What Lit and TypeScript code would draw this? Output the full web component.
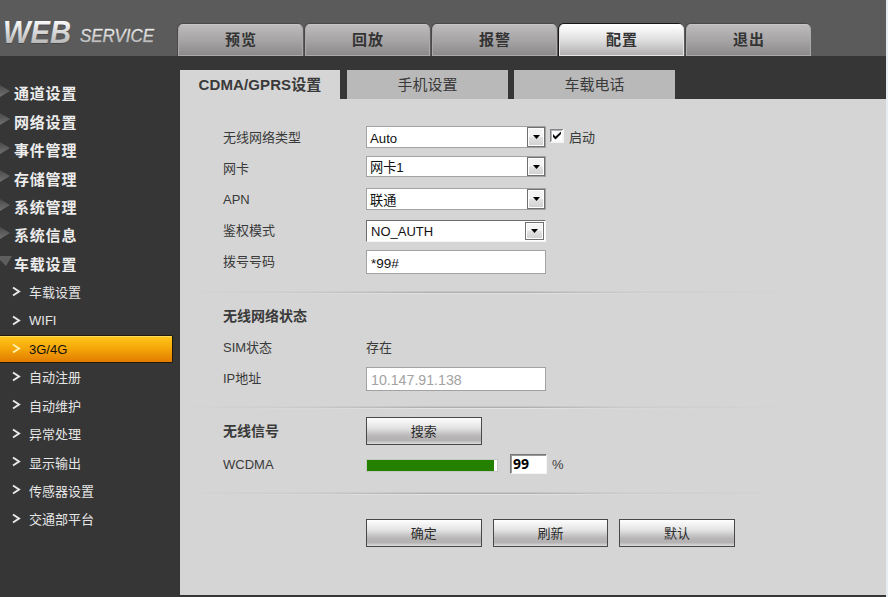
import { LitElement, html, css, svg } from "lit";
import { customElement, property } from "lit/decorators.js";
import { classMap } from "lit/directives/class-map.js";

const arrow = html`<svg class="arrow" width="7" height="4" viewBox="0 0 7 4"><path d="M0 0h7L3.5 4z" fill="#000" /></svg>`;

@customElement("drop-down")
class DropDown extends LitElement {
  @property() value = "";
  @property({ type: Boolean, reflect: true }) sunken = false;
  @property({ type: Boolean, reflect: true }) short = false;
  static styles = css`
    :host { display: flex; box-sizing: border-box; width: 180px; height: 22px; border: 1px solid #a2a2a2; background: #fff; color: #111; font-size: 13.2px; line-height: 23px; }
    :host([short]) { height: 21px; line-height: 21px; }
    :host([sunken]) { border-color: #6d6d6d #f6f6f6 #f6f6f6 #6d6d6d; padding: 1px 1px 0 1px; line-height: 19px; font-size: 13px; }
    .text { flex: 1; padding-left: 3px; white-space: nowrap; }
    .btn { display: flex; align-items: center; justify-content: center; box-sizing: border-box; width: 18px; border: 1px solid #707070; box-shadow: inset 0 0 0 1px #fff; background: linear-gradient(#f4f4f4 0 48%, #e2e2e2 52%, #d0d0d0); }
    :host([sunken]) .btn { width: 19px; margin-bottom: 1px; }
    .arrow { display: block; }
  `;
  render() {
    return html`<span class="text">${this.value}</span><span class="btn">${arrow}</span>`;
  }
}

const mainTabs = ["预览", "回放", "报警", "配置", "退出"];
const subTabs = ["CDMA/GPRS设置", "手机设置", "车载电话"];
const groups = ["通道设置", "网络设置", "事件管理", "存储管理", "系统管理", "系统信息", "车载设置"];
const pages = ["车载设置", "WIFI", "3G/4G", "自动注册", "自动维护", "异常处理", "显示输出", "传感器设置", "交通部平台"];

@customElement("app-root")
class AppRoot extends LitElement {
  static styles = css`
    :host { display: flex; width: 888px; height: 597px; overflow: hidden; background: #e9eef5; font-family: "Liberation Sans", "Noto Sans CJK SC", sans-serif; font-size: 13px; color: #3a3a3a; }
    .page { display: flex; flex-direction: column; width: 886px; background: #363636; }
    header { display: flex; height: 56px; background: #5b5b5b; flex: none; }
    .logo { width: 177px; flex: none; }
    .logo svg { display: block; }
    .tabs { display: flex; gap: 1px; padding-top: 23px; }
    .tab { box-sizing: border-box; width: 126px; height: 33px; border: 1px solid #484848; border-width: 1px 0 0 1px; border-radius: 6px 6px 0 0; }
    .tab span { display: block; box-sizing: border-box; height: 32px; padding-left: 1px; border: 1px solid #aaa; border-top-color: #c6c6c6; border-radius: 5px 5px 0 0; background: linear-gradient(#bdbbbc, #a4a2a3 55%, #8c8a8b); font: bold 15px/29px "Liberation Sans", "Noto Sans CJK SC", sans-serif; letter-spacing: 1px; text-align: center; color: #333; }
    .tab.on { border-color: #181818; }
    .tab.on span { background: linear-gradient(#fff, #e0dfe0 50%, #b2b0b1); border-color: #e6e6e6; border-top-color: #fff; }
    .body { display: flex; flex: 1; }
    nav { display: flex; flex-direction: column; width: 180px; padding-top: 22.8px; flex: none; }
    .group, .item { display: flex; align-items: center; height: 28.4px; flex: none; white-space: nowrap; }
    .group { font-weight: bold; font-size: 15px; letter-spacing: 0.8px; color: #ececec; }
    .group svg { width: 13px; height: 20px; margin: -4px 1px 0 0; }
    .item { box-sizing: border-box; color: #e6e6e6; }
    .item svg { margin: -1px 8px 0 12px; }
    .item.latin { padding-top: 1px; }
    .item.on { width: 173px; height: 28px; margin: 1px 0 -0.6px; padding: 0; color: #111; border: 1px solid #201a0c; border-left: 0; border-radius: 0 2px 2px 0; background: linear-gradient(#ffc61c, #f6a90a 45%, #e27c00); box-shadow: inset 0 1px #ffdc5a; }
    .main { display: flex; flex-direction: column; width: 706px; padding: 14px 0 2px; }
    .sub { display: flex; height: 29px; font-size: 15px; line-height: 29px; text-align: center; }
    .sub div { background: #b9b9b9; width: 161px; margin-left: 6px; }
    .sub .on { background: #d5d5d5; width: 160px; font-weight: bold; margin: 0 1px 0 0; letter-spacing: 0.1px; }
    .panel { flex: 1; background: #d5d5d5; padding: 23px 0 0 43px; }
    .row { display: grid; grid-template-columns: 143px auto 1fr; align-items: start; height: 31px; line-height: 31px; }
    .row > .ctl { margin-top: 4px; }
    .row > .up { margin-top: 3px; }
    .row > .down { margin-top: 5px; }
    .head { font-size: 14px; font-weight: bold; }
    .input { box-sizing: border-box; width: 180px; height: 24px; border: 1px solid #a2a2a2; background: #fff; padding-left: 4px; font-size: 13.5px; line-height: 25px; color: #111; }
    .input.off { color: #a3a3a3; font-size: 14.2px; }
    .enable { display: flex; padding-left: 4px; }
    .check { width: 14px; height: 14px; margin: 7px 5px 0 0; display: block; }
    .rule { height: 4px; margin-left: -33px; width: 620px; background: linear-gradient(#b0b0b0, #b0b0b0) 0 1px / 100% 1px no-repeat, linear-gradient(#c4c4c4, #c4c4c4) 0 0 / 100% 1px no-repeat, linear-gradient(#e2e2e2, #e2e2e2) 0 2px / 100% 1px no-repeat; mask-image: linear-gradient(90deg, transparent, rgba(0, 0, 0, 0.3) 20%, #000 38%, #000 55%, rgba(0, 0, 0, 0.25) 70%, transparent 96%); }
    .r1 { margin-top: 14px; margin-bottom: 6px; }
    .r2 { margin-top: 12px; margin-bottom: 7px; }
    .r3 { margin-top: 12px; }
    .button { box-sizing: border-box; width: 115.6px; height: 28px; border: 1px solid #484848; background: linear-gradient(#fefefe, #e4e4e4 38%, #b8b6b7 70%, #b3b1b2 86%, #dcdcdc); line-height: 27px; text-align: center; color: #2b2b2b; }
    .heading { height: 32px; line-height: 29px; }
    .heading .button { line-height: 27px; }
    .signal { display: flex; }
    .bar { box-sizing: border-box; width: 132px; height: 13px; margin-top: 10px; border: 1px solid #c4c9c1; background: #fff; }
    .fill { height: 100%; background: #248100; }
    .num { box-sizing: border-box; width: 37px; height: 20px; margin: 5px 5px 0 12px; border: 1px solid; border-color: #777 #f5f5f5 #f5f5f5 #777; box-shadow: inset 1px 1px #999; background: #fff; padding-left: 2px; font: bold 14px/17px "Noto Sans", sans-serif; color: #000; }
    .actions { display: flex; gap: 11px; padding: 23px 0 0 143px; }
  `;

  render() {
    return html`<div class="page">
      <header>
        <div class="logo">
          <svg width="177" height="56" viewBox="0 0 177 56">
            <defs><linearGradient id="silver" x1="0" y1="0" x2="0" y2="1"><stop offset=".2" stop-color="#fafafa" /><stop offset=".9" stop-color="#b0b0b0" /></linearGradient></defs>
            <g font-family="Liberation Sans, sans-serif" font-style="italic">
              <g fill="#3d3d3d" opacity=".6"><text x="3" y="44" font-size="32" font-weight="bold" textLength="68" lengthAdjust="spacingAndGlyphs">WEB</text><text x="80" y="43" font-size="19" textLength="74" lengthAdjust="spacingAndGlyphs">SERVICE</text></g>
              <text x="3" y="42.5" font-size="32" font-weight="bold" fill="url(#silver)" textLength="68" lengthAdjust="spacingAndGlyphs">WEB</text>
              <text x="80" y="42" font-size="19" fill="url(#silver)" stroke="#c4c4c4" stroke-width=".4" textLength="74" lengthAdjust="spacingAndGlyphs">SERVICE</text>
            </g>
          </svg>
        </div>
        <div class="tabs">${mainTabs.map((t, i) => html`<div class=${classMap({ tab: true, on: i === 3 })}><span>${t}</span></div>`)}</div>
      </header>
      <div class="body">
        <nav>
          ${groups.map((g, i) => html`<div class="group">
            <svg viewBox="0 0 13 20">
              <defs><linearGradient id="shade" x1="0" y1="0" x2="0" y2="1"><stop offset="0" stop-color="#4a4a4a" /><stop offset="1" stop-color="#707070" /></linearGradient></defs>
              ${i < 6
                ? svg`<path d="M0 4L10 10L0 16z" fill="url(#shade)" />`
                : svg`<path d="M0 5H12L6 15L0 9z" fill="#5e5e5e" />`}</svg>${g}</div>`)}
          ${pages.map((p, i) => html`<div class=${classMap({ item: true, on: i === 2, latin: i === 1 })}>
            <svg width="9" height="11" viewBox="0 0 9 11"><path d="M1 1.5L7 5.5L1 9.5" fill="none" stroke=${i === 2 ? "#fff0a8" : "#e8e8e8"} stroke-width="2" /></svg>${p}</div>`)}
        </nav>
        <div class="main">
          <div class="sub">${subTabs.map((t, i) => html`<div class=${classMap({ on: i === 0 })}>${t}</div>`)}</div>
          <div class="panel">
            <div class="row"><span>无线网络类型</span><drop-down class="ctl" value="Auto"></drop-down>
              <span class="enable"><svg class="check" viewBox="0 0 14 14"><path d="M0 0h14v14H0z" fill="#f4f4f4" /><path d="M0 13V0H13V1H1V13z" fill="#858585" /><path d="M1 12V1H12V2H2V12z" fill="#b4b4bc" /><path d="M2 2h10v10H2z" fill="#fff" /><path d="M3 5V8L5.5 10.5L11 5V2.5L5.5 7.5z" fill="#111" /></svg>启动</span></div>
            <div class="row"><span>网卡</span><drop-down class="up" short value="网卡1"></drop-down></div>
            <div class="row"><span>APN</span><drop-down class="ctl" value="联通"></drop-down></div>
            <div class="row"><span>鉴权模式</span><drop-down class="down" sunken value="NO_AUTH"></drop-down></div>
            <div class="row"><span>拨号号码</span><div class="input ctl">*99#</div></div>
            <div class="rule r1"></div>
            <div class="row"><span class="head">无线网络状态</span></div>
            <div class="row"><span>SIM状态</span><span>存在</span></div>
            <div class="row"><span>IP地址</span><div class="input off ctl">10.147.91.138</div></div>
            <div class="rule r2"></div>
            <div class="row heading"><span class="head">无线信号</span><div class="button">搜索</div></div>
            <div class="row"><span>WCDMA</span><div class="signal"><div class="bar"><div class="fill" style="width:98%"></div></div><div class="num">99</div><span>%</span></div></div>
            <div class="rule r3"></div>
            <div class="actions">${["确定", "刷新", "默认"].map((b) => html`<div class="button">${b}</div>`)}</div>
          </div>
        </div>
      </div>
    </div>`;
  }
}
